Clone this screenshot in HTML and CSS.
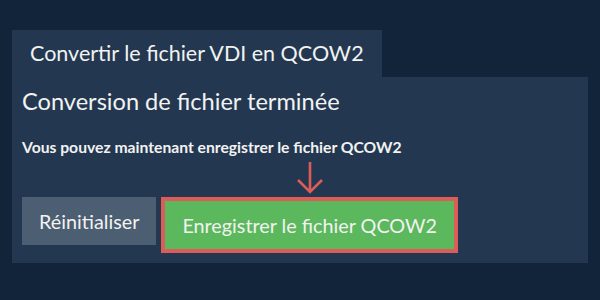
FILE: index.html
```html
<!DOCTYPE html>
<html lang="fr">
<head>
    <meta charset="UTF-8">
    <meta name="viewport" content="width=device-width, initial-scale=1.0">
    <title>Convertir le fichier VDI en QCOW2</title>
    <link rel="stylesheet" href="styles.css">
</head>
<body>
    <div id="main">
        <div class="tab">Convertir le fichier VDI en QCOW2</div>
        <div class="panel">
            <h2>Conversion de fichier terminée</h2>
            <p class="note">Vous pouvez maintenant enregistrer le fichier QCOW2</p>
            <div class="arrow">
                <svg width="28" height="34" viewBox="0 0 28 34">
                    <path d="M14 1 V31 M2 19 L14 31 L26 19" fill="none" stroke="#dc5c58" stroke-width="2.6"/>
                </svg>
            </div>
            <div class="buttons">
                <button id="reset">Réinitialiser</button>
                <button id="save">Enregistrer le fichier QCOW2</button>
            </div>
        </div>
    </div>
</body>
</html>
```

FILE: styles.css
```css
body {
    margin: 0;
    padding: 30px 12px;
    background-color: #12243a;
    color: #f2f2f2;
    font-family: Lato, "Noto Sans", sans-serif;
}

.tab {
    display: inline-block;
    height: 47px;
    line-height: 47px;
    padding: 0 18px;
    background-color: #233850;
    font-size: 21.5px;
}

.panel {
    background-color: #233850;
    padding: 10px;
}

h2 {
    margin: 0;
    font-size: 23.6px;
    font-weight: normal;
}

.note {
    margin: 23px 0 0 0;
    font-size: 15.7px;
    font-weight: bold;
}

.arrow {
    height: 36px;
    margin-left: 274px;
    padding-top: 5px;
}

.buttons {
    display: flex;
    align-items: flex-start;
    gap: 5px;
}

button {
    margin: 0;
    padding: 0 17px;
    height: 48px;
    border: none;
    color: #f2f2f2;
    font-family: Lato, "Noto Sans", sans-serif;
    font-size: 19.8px;
    cursor: pointer;
}

#reset {
    background-color: #4c5e71;
}

#save {
    height: 56px;
    background-color: #5cb85c;
    border: 4px solid #dc5c58;
}
```
